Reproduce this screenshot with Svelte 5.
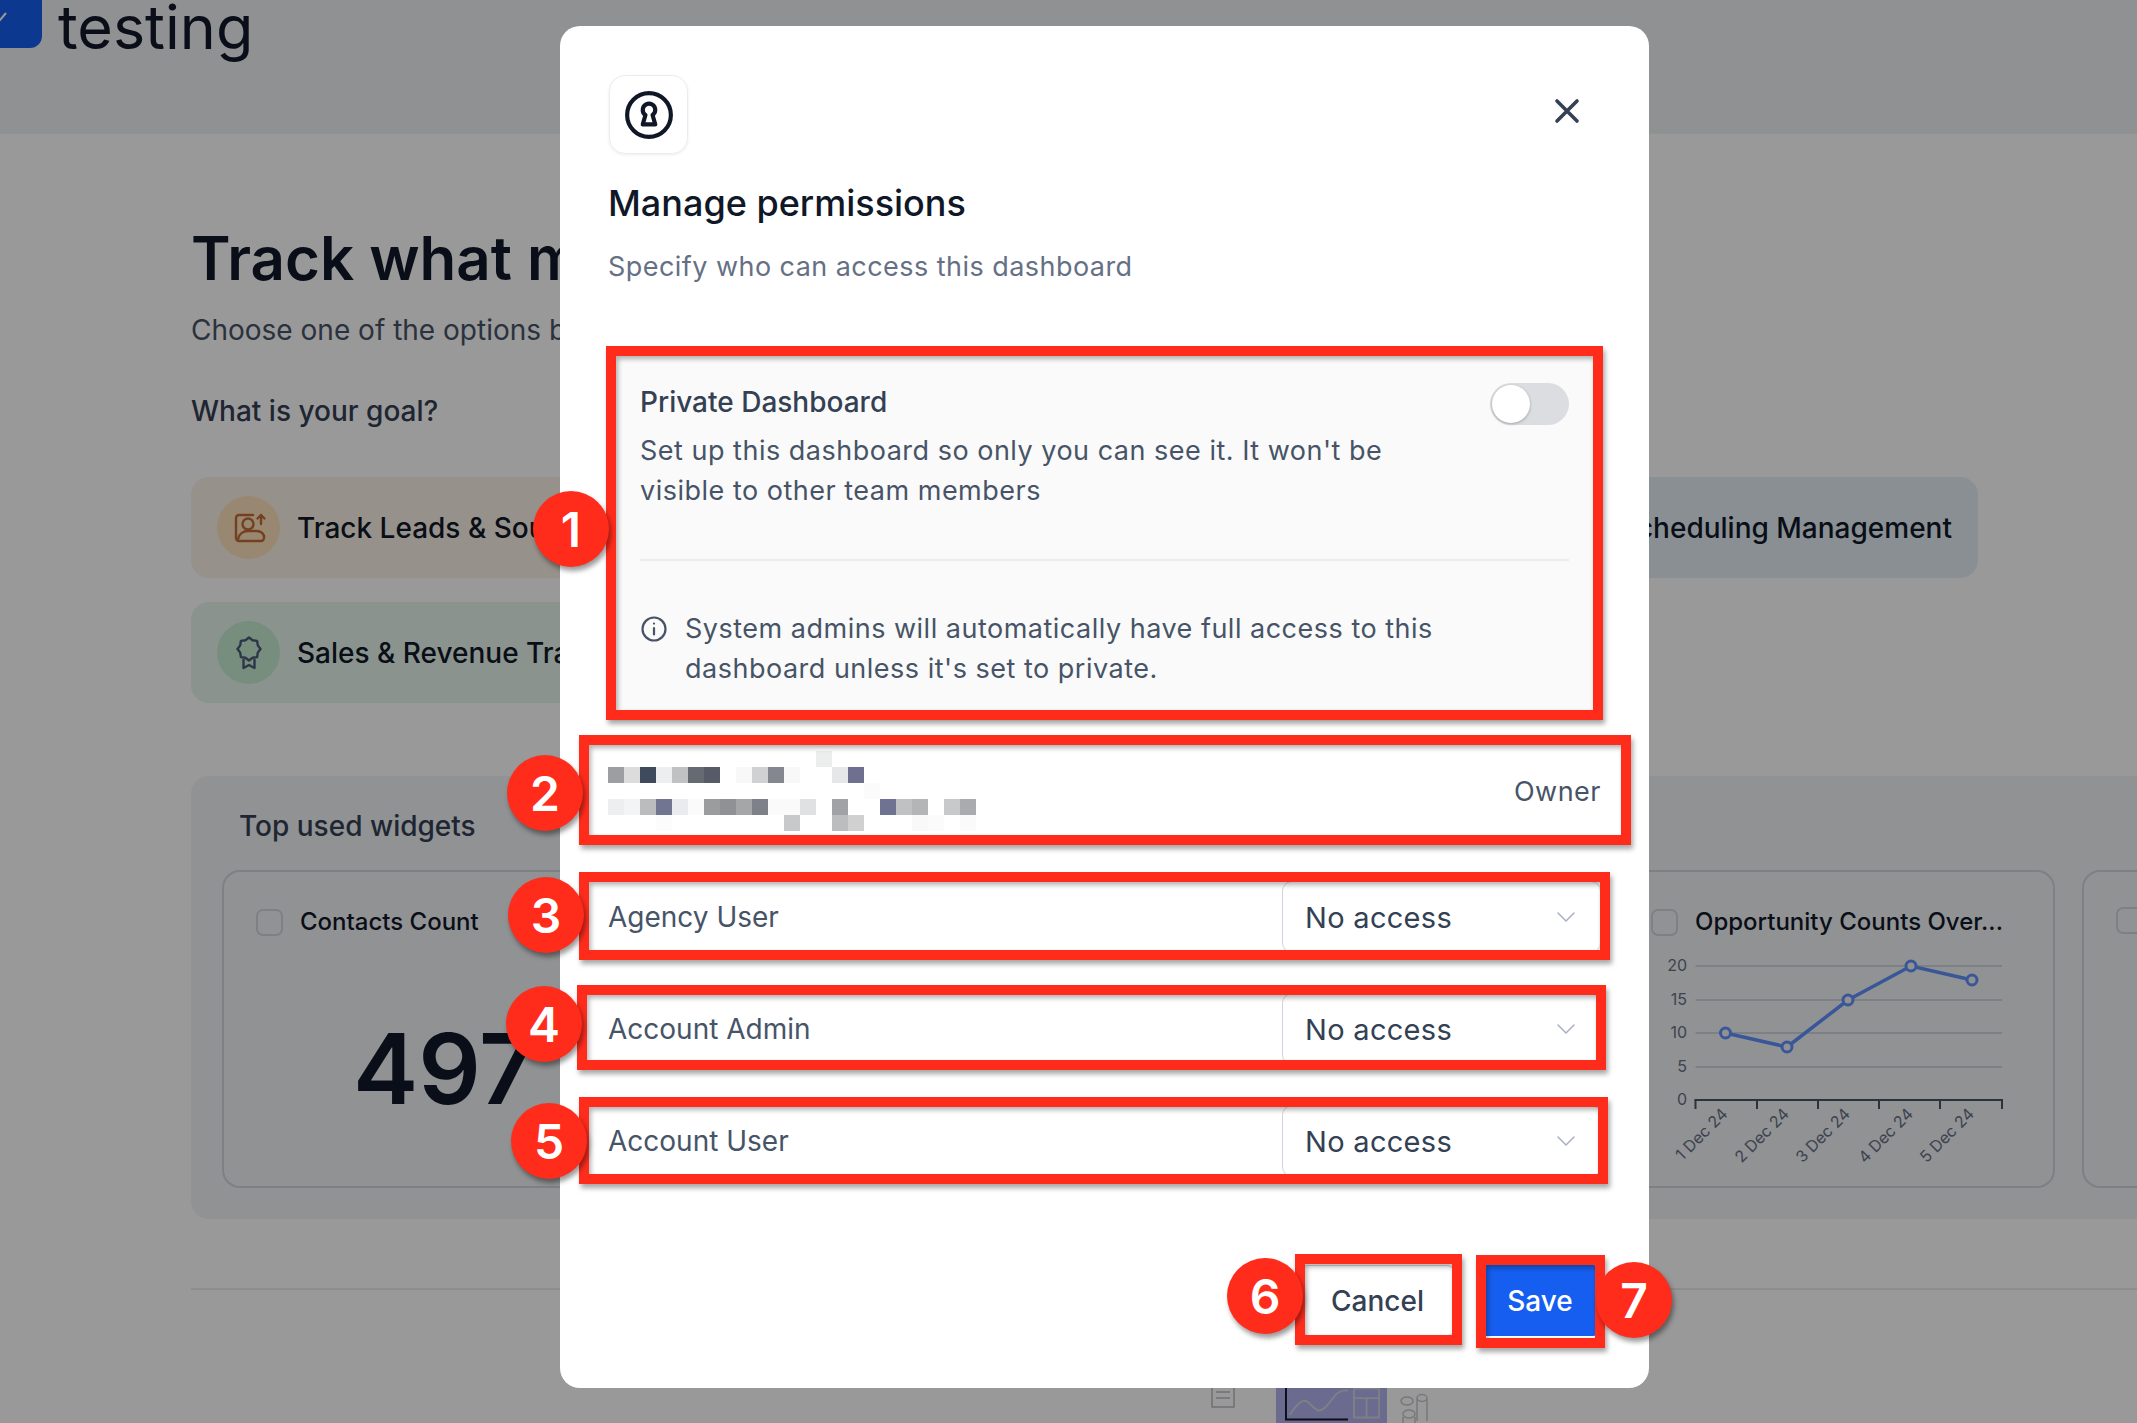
<script lang="ts">
  // mosaic over the owner's name, one string per 16px row, "" = nothing drawn
  const mosaic: string[][] = [
    ["", "", "", "", "", "", "", "", "", "", "", "", "", "#eceded"],
    ["#9c9ea2", "#dcdcdc", "#3f4a5c", "#eceef0", "#c0c1c3", "#666a72", "#575b68", "", "#f8f8f8", "#d0d1d3", "#84878f", "#f8f8f8", "", "", "#e6e7e8", "#6f7090"],
    ["", "", "", "", "", "", "", "", "", "", "", "", "", "", "", "", "#fbfbfb"],
    ["#edeef0", "#f3f4f5", "#bbbcbe", "#71758f", "#eaebee", "#fafafa", "#9a9c9e", "#8f9194", "#a5a6a8", "#7e818a", "#fafafa", "#fafafa", "#e0e1e2", "", "#a0a2a5", "", "", "#6f7290", "#c0c1c3", "#b4b5b7", "", "#c8c9cb", "#aaabaf"],
    ["", "", "", "#fcfcfc", "", "", "", "", "", "", "", "#c8c9ca", "", "", "#bcbdbe", "#d0d0d0", "", "", "", "#f9f9f9", "#fbfbfb", "", "#fafafa"]
  ];

  const roles = ["Agency User", "Account Admin", "Account User"];

  const boxes = [
    { x: 606, y: 346, w: 997, h: 374 },
    { x: 579, y: 735, w: 1052, h: 110 },
    { x: 579, y: 872, w: 1031, h: 88 },
    { x: 577, y: 985, w: 1029, h: 85 },
    { x: 579, y: 1097, w: 1029, h: 87 },
    { x: 1295, y: 1254, w: 167, h: 91 },
    { x: 1476, y: 1255, w: 129, h: 93 }
  ];

  const badges = [
    { n: 1, x: 571, y: 529 },
    { n: 2, x: 545, y: 793 },
    { n: 3, x: 546, y: 915 },
    { n: 4, x: 544, y: 1024 },
    { n: 5, x: 549, y: 1141 },
    { n: 6, x: 1265, y: 1296 },
    { n: 7, x: 1634, y: 1300 }
  ];

  const gridY = [
    { label: "20", y: 15 },
    { label: "15", y: 49 },
    { label: "10", y: 82 },
    { label: "5", y: 116 },
    { label: "0", y: 149 }
  ];
  const ticks = [78.5, 140, 201, 262, 323, 385];
  const points = [[108.5, 82], [170, 96], [231, 49], [294, 15], [355, 29]];
  const days = ["1 Dec 24", "2 Dec 24", "3 Dec 24", "4 Dec 24", "5 Dec 24"];

  // scalloped edge of the award icon
  const rosette = Array.from({ length: 16 }, (_, i) => {
    const r = i % 2 ? 9.5 : 11.5;
    const a = (i * Math.PI) / 8;
    return `${(17 + r * Math.sin(a)).toFixed(1)},${(13 - r * Math.cos(a)).toFixed(1)}`;
  }).join(" ");
</script>

<div class="page">
  <header class="topbar">
    <div class="logo">
      <svg width="12" height="12" viewBox="0 0 12 12"><path d="M-3 7l3 3 6-7" fill="none" stroke="#fff" stroke-width="2" /></svg>
    </div>
    <span class="workspace">testing</span>
  </header>

  <main class="main">
    <h1>Track what matters to your business</h1>
    <p class="lead">Choose one of the options below to get started with a template</p>
    <p class="goal">What is your goal?</p>

    <div class="goals">
      <div class="goal-row">
        <div class="pill orange">
          <span class="pill-icon">
            <svg width="36" height="36" viewBox="0 0 36 36" fill="none" stroke="#c26b35" stroke-width="2.4" stroke-linecap="round" stroke-linejoin="round">
              <path d="M22 5H8a3 3 0 0 0-3 3v20a3 3 0 0 0 3 3h22a3 3 0 0 0 3-3v-2" />
              <circle cx="17" cy="14" r="5.5" />
              <path d="M7 29c1-5 5-8 10-8h8c4 0 7 2 8 5" />
              <path d="M30 14V5M26.5 8.5L30 5l3.5 3.5" />
            </svg>
          </span>
          <span class="pill-text">Track Leads &amp; Sources Performance</span>
        </div>
        <div class="pill slate">
          <span class="pill-icon"></span>
          <span class="pill-text">Appointment Scheduling Management</span>
        </div>
      </div>
      <div class="goal-row">
        <div class="pill green">
          <span class="pill-icon">
            <svg width="34" height="34" viewBox="0 0 34 34" fill="none" stroke="#4b5a78" stroke-width="2.4" stroke-linejoin="round">
              <polygon points={rosette} />
              <path d="M11.500 23v9l5.500-3 5.500 3v-9" />
            </svg>
          </span>
          <span class="pill-text">Sales &amp; Revenue Tracking</span>
        </div>
      </div>
    </div>

    <section class="widgets">
      <h2>Top used widgets</h2>
      <div class="cards">
        <article class="card">
          <div class="card-head"><span class="check"></span><span>Contacts Count</span></div>
          <div class="big-number">497</div>
        </article>
        <article class="card"></article>
        <article class="card"></article>
        <article class="card">
          <div class="card-head"><span class="check"></span><span>Opportunity Counts Over...</span></div>
          <svg class="chart" width="438" height="215" viewBox="0 0 438 215">
            {#each gridY as g}
              {#if g.y !== 149}
                <line x1="78.5" x2="385" y1={g.y} y2={g.y} stroke="#c6ccd8" stroke-width="1.500" />
              {/if}
              <text class="axis" x="70" y={g.y + 5} text-anchor="end">{g.label}</text>
            {/each}
            <line x1="77.5" x2="386" y1="149" y2="149" stroke="#475467" stroke-width="2" />
            {#each ticks as t}
              <line x1={t} x2={t} y1="149" y2="158" stroke="#475467" stroke-width="2" />
            {/each}
            <polyline points={points.map((p) => p.join(",")).join(" ")} fill="none" stroke="#5f90ff" stroke-width="3.500" />
            {#each points as p, i}
              <circle cx={p[0]} cy={p[1]} r="5" fill="#f0f2f5" stroke="#5f90ff" stroke-width="3" />
              <text class="axis" transform="translate({p[0] + 3} 164) rotate(-45)" text-anchor="end">{days[i]}</text>
            {/each}
          </svg>
        </article>
        <article class="card"><div class="card-head"><span class="check"></span></div></article>
      </div>
    </section>

    <hr class="rule" />

    <div class="chart-types">
      <svg class="type-doc" width="24" height="40" viewBox="0 0 24 40" fill="none" stroke="#b8bcc4" stroke-width="1.500">
        <path d="M1 1h22v38H1zM5 18h14M5 24h14M5 30h14" />
      </svg>
      <div class="type-active">
        <svg width="70" height="36" viewBox="0 0 70 36" fill="none">
          <path d="M1 0v33h64" stroke="#101828" stroke-width="2" />
          <path d="M5 28c8-12 14-18 20-12s10 12 18 3 10-17 22-16" stroke="#d0d5dd" stroke-width="2" />
        </svg>
        <svg width="28" height="32" viewBox="0 0 28 32" fill="none" stroke="#d0d5dd" stroke-width="2">
          <path d="M1 1h26v30H1zM1 11h26M14 11v20" />
        </svg>
      </div>
      <svg class="type-scroll" width="30" height="36" viewBox="0 0 30 36" fill="none" stroke="#c6c9ce" stroke-width="1.500">
        <ellipse cx="8" cy="8" rx="6" ry="4" />
        <ellipse cx="23" cy="5" rx="5" ry="3.500" />
        <ellipse cx="10" cy="21" rx="6" ry="4" />
        <path d="M18 6v22M28 6v22M4 24v12M16 24v12" />
      </svg>
    </div>
  </main>

  <div class="backdrop"></div>

  <div class="modal">
    <div class="modal-top">
      <div class="modal-icon">
        <svg width="50" height="50" viewBox="0 0 24 24" fill="none" stroke="#101828" stroke-width="2" stroke-linejoin="round">
          <circle cx="12" cy="12" r="10.500" />
          <path d="M15 9.500a3 3 0 1 0-4.700 2.500L9 16.500h6l-1.300-4.500a3 3 0 0 0 1.300-2.500z" />
        </svg>
      </div>
      <button class="close" aria-label="Close">
        <svg width="28" height="28" viewBox="0 0 28 28" fill="none" stroke="#344054" stroke-width="3.600" stroke-linecap="round">
          <path d="M4 4l20 20M24 4L4 24" />
        </svg>
      </button>
    </div>
    <h3>Manage permissions</h3>
    <p class="sub">Specify who can access this dashboard</p>

    <div class="panel">
      <div class="panel-top">
        <div>
          <div class="panel-title">Private Dashboard</div>
          <p class="panel-text narrow">Set up this dashboard so only you can see it. It won't be visible to other team members</p>
        </div>
        <span class="toggle"><span class="knob"></span></span>
      </div>
      <div class="panel-rule"></div>
      <div class="panel-note">
        <svg width="28" height="28" viewBox="0 0 28 28" fill="none" stroke="#475467" stroke-width="2.200" stroke-linecap="round">
          <circle cx="14" cy="14" r="11.500" />
          <path d="M14 13v6.500M14 8.500v.1" />
        </svg>
        <p class="panel-text narrow">System admins will automatically have full access to this dashboard unless it's set to private.</p>
      </div>
    </div>

    <div class="owner">
      <div class="mosaic">
        {#each mosaic as row}
          <div class="mosaic-row">
            {#each row as c}
              <span class="cell" style="background: {c || 'transparent'}"></span>
            {/each}
          </div>
        {/each}
      </div>
      <span class="owner-label">Owner</span>
    </div>

    <div class="roles">
      {#each roles as role}
        <div class="role">
          <span>{role}</span>
          <div class="select">
            <span>No access</span>
            <svg width="20" height="12" viewBox="0 0 20 12" fill="none" stroke="#a8b0bd" stroke-width="1.500" stroke-linecap="round" stroke-linejoin="round">
              <path d="M2 2l8 8 8-8" />
            </svg>
          </div>
        </div>
      {/each}
    </div>

    <div class="footer">
      <button class="btn cancel">Cancel</button>
      <button class="btn save">Save</button>
    </div>
  </div>

  {#each boxes as b}
    <div class="mark-box" style="left: {b.x}px; top: {b.y}px; width: {b.w}px; height: {b.h}px"></div>
  {/each}
  {#each badges as b}
    <div class="mark-badge" style="left: {b.x - 38}px; top: {b.y - 38}px">{b.n}</div>
  {/each}
</div>

<style>
  :global(body) {
    margin: 0;
    background: #fff;
    overflow: hidden;
  }

  .page {
    position: relative;
    height: 1423px;
    overflow: hidden;
    font-family: Inter, "Noto Sans", sans-serif;
    color: #101828;
  }

  .topbar {
    display: flex;
    align-items: flex-start;
    gap: 16px;
    height: 134px;
    background: #f0f2f5;
    overflow: hidden;
  }

  .logo {
    width: 42px;
    height: 65px;
    margin-top: -17px;
    background: #155eef;
    border-bottom-right-radius: 12px;
    display: flex;
    align-items: center;
  }

  .workspace {
    font-size: 61px;
    line-height: 64px;
    margin-top: -5px;
  }

  .main {
    padding-left: 191px;
  }

  h1 {
    margin: 87px 0 0;
    font-size: 60px;
    line-height: 74px;
    font-weight: 600;
    white-space: nowrap;
  }

  .lead {
    margin: 15px 0 0;
    font-size: 28px;
    line-height: 40px;
    color: #475467;
    white-space: nowrap;
  }

  .goal {
    margin: 41px 0 0;
    font-size: 28px;
    line-height: 40px;
    font-weight: 500;
    color: #344054;
  }

  .goals {
    display: flex;
    flex-direction: column;
    gap: 24px;
    margin-top: 46px;
    width: 1787px;
  }

  .goal-row {
    display: flex;
    justify-content: space-between;
  }

  .pill {
    display: flex;
    align-items: center;
    gap: 17px;
    height: 101px;
    padding: 0 26px;
    border-radius: 18px;
    box-sizing: border-box;
    white-space: nowrap;
  }

  .pill.orange { background: #faf2e6; }
  .pill.slate { background: #e6eff5; }
  .pill.green { background: #e6f6ec; }

  .pill-icon {
    width: 63px;
    height: 63px;
    border-radius: 50%;
    display: flex;
    align-items: center;
    justify-content: center;
  }

  .orange .pill-icon { background: #fde3bd; }
  .green .pill-icon { background: #c6ecd2; }
  .slate .pill-icon { background: #d0dde8; }

  .pill-text {
    font-size: 28px;
    font-weight: 500;
    color: #101828;
  }

  .widgets {
    margin-top: 73px;
    padding: 35px 0 31px 31px;
    height: 443px;
    box-sizing: border-box;
    background: #f2f4f7;
    border-radius: 18px 0 0 18px;
    overflow: hidden;
  }

  .widgets h2 {
    margin: 0 0 29px 17px;
    font-size: 28px;
    line-height: 30px;
    font-weight: 500;
    color: #344054;
  }

  .cards {
    display: flex;
    gap: 27px;
  }

  .card {
    flex: none;
    width: 438px;
    height: 318px;
    box-sizing: border-box;
    border: 2px solid #d0d5dd;
    border-radius: 18px;
  }

  .card-head {
    display: flex;
    align-items: center;
    gap: 17px;
    margin: 35px 0 0 32px;
    font-size: 24px;
    line-height: 30px;
    font-weight: 500;
    white-space: nowrap;
  }

  .check {
    width: 27px;
    height: 27px;
    box-sizing: border-box;
    border: 2px solid #d0d5dd;
    border-radius: 7px;
  }

  .big-number {
    margin: 77px 0 0 129px;
    font-size: 98px;
    line-height: 110px;
    font-weight: 600;
  }

  .chart {
    display: block;
    margin: 14px 0 0 -2px;
  }

  .axis {
    font-family: Inter, sans-serif;
    font-size: 16px;
    fill: #667085;
  }

  .rule {
    margin: 69px 0 0;
    border: 0;
    border-top: 2px solid #eaecf0;
  }

  .chart-types {
    display: flex;
    align-items: flex-start;
    margin: 81px 0 0 1020px;
  }

  .type-doc {
    margin: -3px 41px 0 0;
  }

  .type-scroll {
    margin: 22px 0 0 12px;
  }

  .type-active {
    display: flex;
    align-items: flex-start;
    justify-content: space-between;
    width: 111px;
    height: 60px;
    padding: 16px 7px 0 9px;
    box-sizing: border-box;
    background: #b2b2f0;
  }

  .backdrop {
    position: absolute;
    inset: 0;
    background: rgba(0, 0, 0, 0.4);
  }

  .modal {
    position: absolute;
    left: 560px;
    top: 26px;
    width: 1089px;
    height: 1362px;
    box-sizing: border-box;
    display: flex;
    flex-direction: column;
    padding: 49px 48px 52px;
    background: #fff;
    border-radius: 20px;
  }

  .modal-top {
    display: flex;
    justify-content: space-between;
    align-items: flex-start;
  }

  .modal-icon {
    width: 79px;
    height: 79px;
    margin-left: 1px;
    box-sizing: border-box;
    display: flex;
    align-items: center;
    justify-content: center;
    border: 1.500px solid #eaecf0;
    border-radius: 16px;
    box-shadow: 0 1px 3px rgba(16, 24, 40, 0.08);
  }

  .close {
    padding: 0;
    margin: 22px 20px 0 0;
    border: 0;
    background: none;
    display: flex;
  }

  h3 {
    margin: 27px 0 0;
    font-size: 36px;
    line-height: 44px;
    font-weight: 500;
  }

  .sub {
    margin: 22px 0 0;
    font-size: 27px;
    line-height: 40px;
    color: #667085;
    letter-spacing: 0.45px;
  }

  .panel {
    margin-top: 59px;
    padding: 36px 32px 32px;
    background: #fafafa;
  }

  .panel-top {
    display: flex;
    justify-content: space-between;
    align-items: flex-start;
  }

  .panel-title {
    font-size: 28px;
    line-height: 40px;
    font-weight: 500;
    color: #344054;
    margin-bottom: 9px;
  }

  .panel-text {
    margin: 0;
    font-size: 27px;
    line-height: 40px;
    color: #475467;
    letter-spacing: 0.5px;
  }

  .panel-text.narrow {
    width: 780px;
  }

  .toggle {
    width: 79px;
    height: 42px;
    margin-top: 1px;
    border-radius: 21px;
    background: #dcdde0;
    display: flex;
    align-items: center;
  }

  .knob {
    width: 38px;
    height: 38px;
    margin-left: 2px;
    border-radius: 50%;
    background: #fff;
    box-shadow: 0 1px 3px rgba(16, 24, 40, 0.3);
  }

  .panel-rule {
    margin: 48px 0;
    border-top: 2px solid #eaecf0;
  }

  .panel-note {
    display: flex;
    gap: 17px;
    align-items: flex-start;
  }

  .panel-note svg {
    flex: none;
    margin-top: 6px;
  }

  .owner {
    display: flex;
    justify-content: space-between;
    align-items: center;
    height: 80px;
    margin-top: 30px;
  }

  .mosaic-row {
    display: flex;
    height: 16px;
  }

  .cell {
    width: 16px;
    height: 16px;
  }

  .owner-label {
    font-size: 27px;
    color: #475467;
    letter-spacing: 0.5px;
  }

  .roles {
    display: flex;
    flex-direction: column;
    gap: 40px;
    margin-top: 50px;
  }

  .role {
    display: flex;
    justify-content: space-between;
    align-items: center;
    height: 72px;
    font-size: 28px;
    color: #475467;
  }

  .select {
    width: 319px;
    height: 72px;
    box-sizing: border-box;
    padding: 0 24px 0 22px;
    display: flex;
    justify-content: space-between;
    align-items: center;
    border: 1.500px solid #d0d5dd;
    border-radius: 10px;
    color: #344054;
    font-size: 29px;
    letter-spacing: 0.3px;
  }

  .footer {
    margin-top: auto;
    display: flex;
    justify-content: flex-end;
    gap: 24px;
  }

  .btn {
    height: 71px;
    border-radius: 8px;
    font-family: inherit;
    font-size: 28px;
    font-weight: 500;
  }

  .cancel {
    width: 155px;
    background: #fff;
    border: 1.500px solid #d0d5dd;
    color: #344054;
  }

  .save {
    width: 122px;
    background: #155eef;
    border: 0;
    color: #fff;
  }

  .mark-box {
    position: absolute;
    box-sizing: border-box;
    border: 10px solid #ff2c1c;
    box-shadow: 2px 4px 5px rgba(0, 0, 0, 0.35), inset 2px 3px 5px rgba(0, 0, 0, 0.3);
  }

  .mark-badge {
    position: absolute;
    width: 76px;
    height: 76px;
    border-radius: 50%;
    display: flex;
    align-items: center;
    justify-content: center;
    background: #ff2c1c;
    color: #fff;
    font-family: Inter, sans-serif;
    font-size: 48px;
    font-weight: 600;
    box-shadow: 2px 4px 5px rgba(0, 0, 0, 0.4);
  }
</style>
